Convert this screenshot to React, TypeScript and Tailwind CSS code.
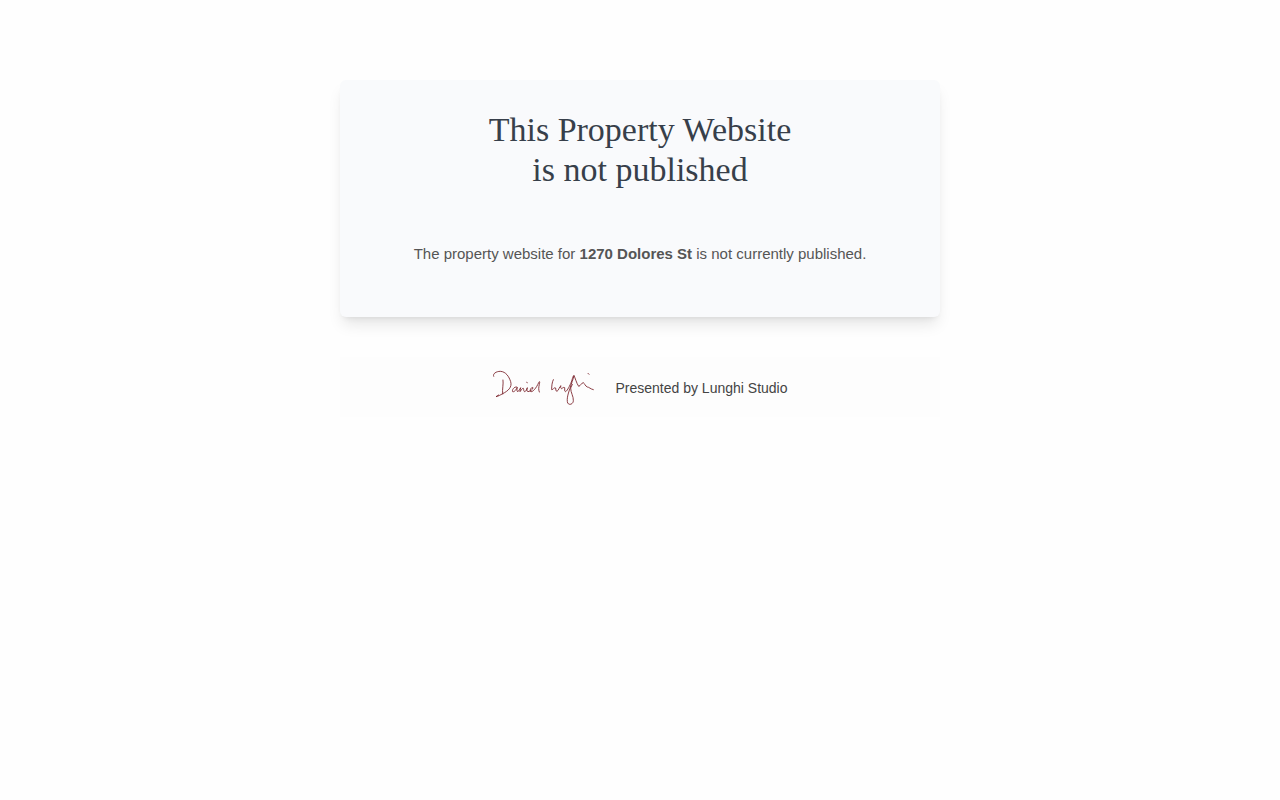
function Signature() {
  return (
    <svg
      viewBox="0 0 336 138"
      className="h-[46px] w-28 shrink-0"
      fill="none"
      stroke="#782029"
      strokeWidth="2.6"
      strokeLinecap="round"
      strokeLinejoin="round"
      role="img"
      aria-label="Daniel Lunghi signature"
    >
      <path d="M23 37C19 29 31 22 43 22C60 23 69 38 74 53C79 70 66 81 50 89C43 93 36 97 30 98L38 93" />
      <path d="M51 48C53 60 48 76 50 90" />
      <path d="M92 69C84 67 77 79 80 83C85 85 91 76 94 70C92 76 92 83 96 83C100 80 101 74 104 71C103 76 102 79 102 83C106 78 109 72 112 73C114 77 112 82 116 83C120 82 122 77 124 71C122 77 122 82 126 83C132 82 141 77 141 71C137 68 131 77 133 82C139 87 151 72 158 56C161 50 162 53 160 61C158 70 157 77 160 84" />
      <path d="M122 55L124 56" />
      <path d="M202 47C198 55 197 66 197 77C202 78 203 69 209 72C210 76 208 81 213 82C218 80 221 66 225 65C223 70 224 73 227 74C231 71 233 69 236 71C237 76 234 82 239 83C244 80 252 64 256 54C259 45 261 35 264 35C268 42 271 57 278 67C285 65 284 58 292 56C296 58 297 66 304 69C309 69 313 75 322 77" />
      <path d="M264 35C262 45 256 58 252 73C247 87 241 105 245 117C250 125 262 120 262 110C263 97 254 87 254 72L259 61" />
      <path d="M306 28L309 31" />
    </svg>
  );
}

export default function App() {
  return (
    <div className="min-h-screen bg-[#fefefe] px-5 pt-20 font-['Liberation_Sans',Arial,sans-serif]">
      <main className="mx-auto max-w-[600px] rounded-md bg-[#f9fafc] px-5 pt-[30px] pb-[50px] text-center shadow-lg">
        <h1 className="font-['Liberation_Serif','Times_New_Roman',serif] text-[34px] leading-10 text-[#373f4a]">
          This Property Website
          <br />
          is not published
        </h1>
        <p className="mt-[50px] text-[15px] leading-[27px] text-[#555555]">
          The property website for <strong>1270 Dolores St</strong> is not
          currently published.
        </p>
      </main>
      <footer className="mx-auto mt-10 flex h-15 max-w-[600px] items-center justify-center gap-[17px] bg-[#fdfdfd] pr-[6px] text-sm text-[#444444]">
        <Signature />
        <span className="pt-[2px]">Presented by Lunghi Studio</span>
      </footer>
    </div>
  );
}
